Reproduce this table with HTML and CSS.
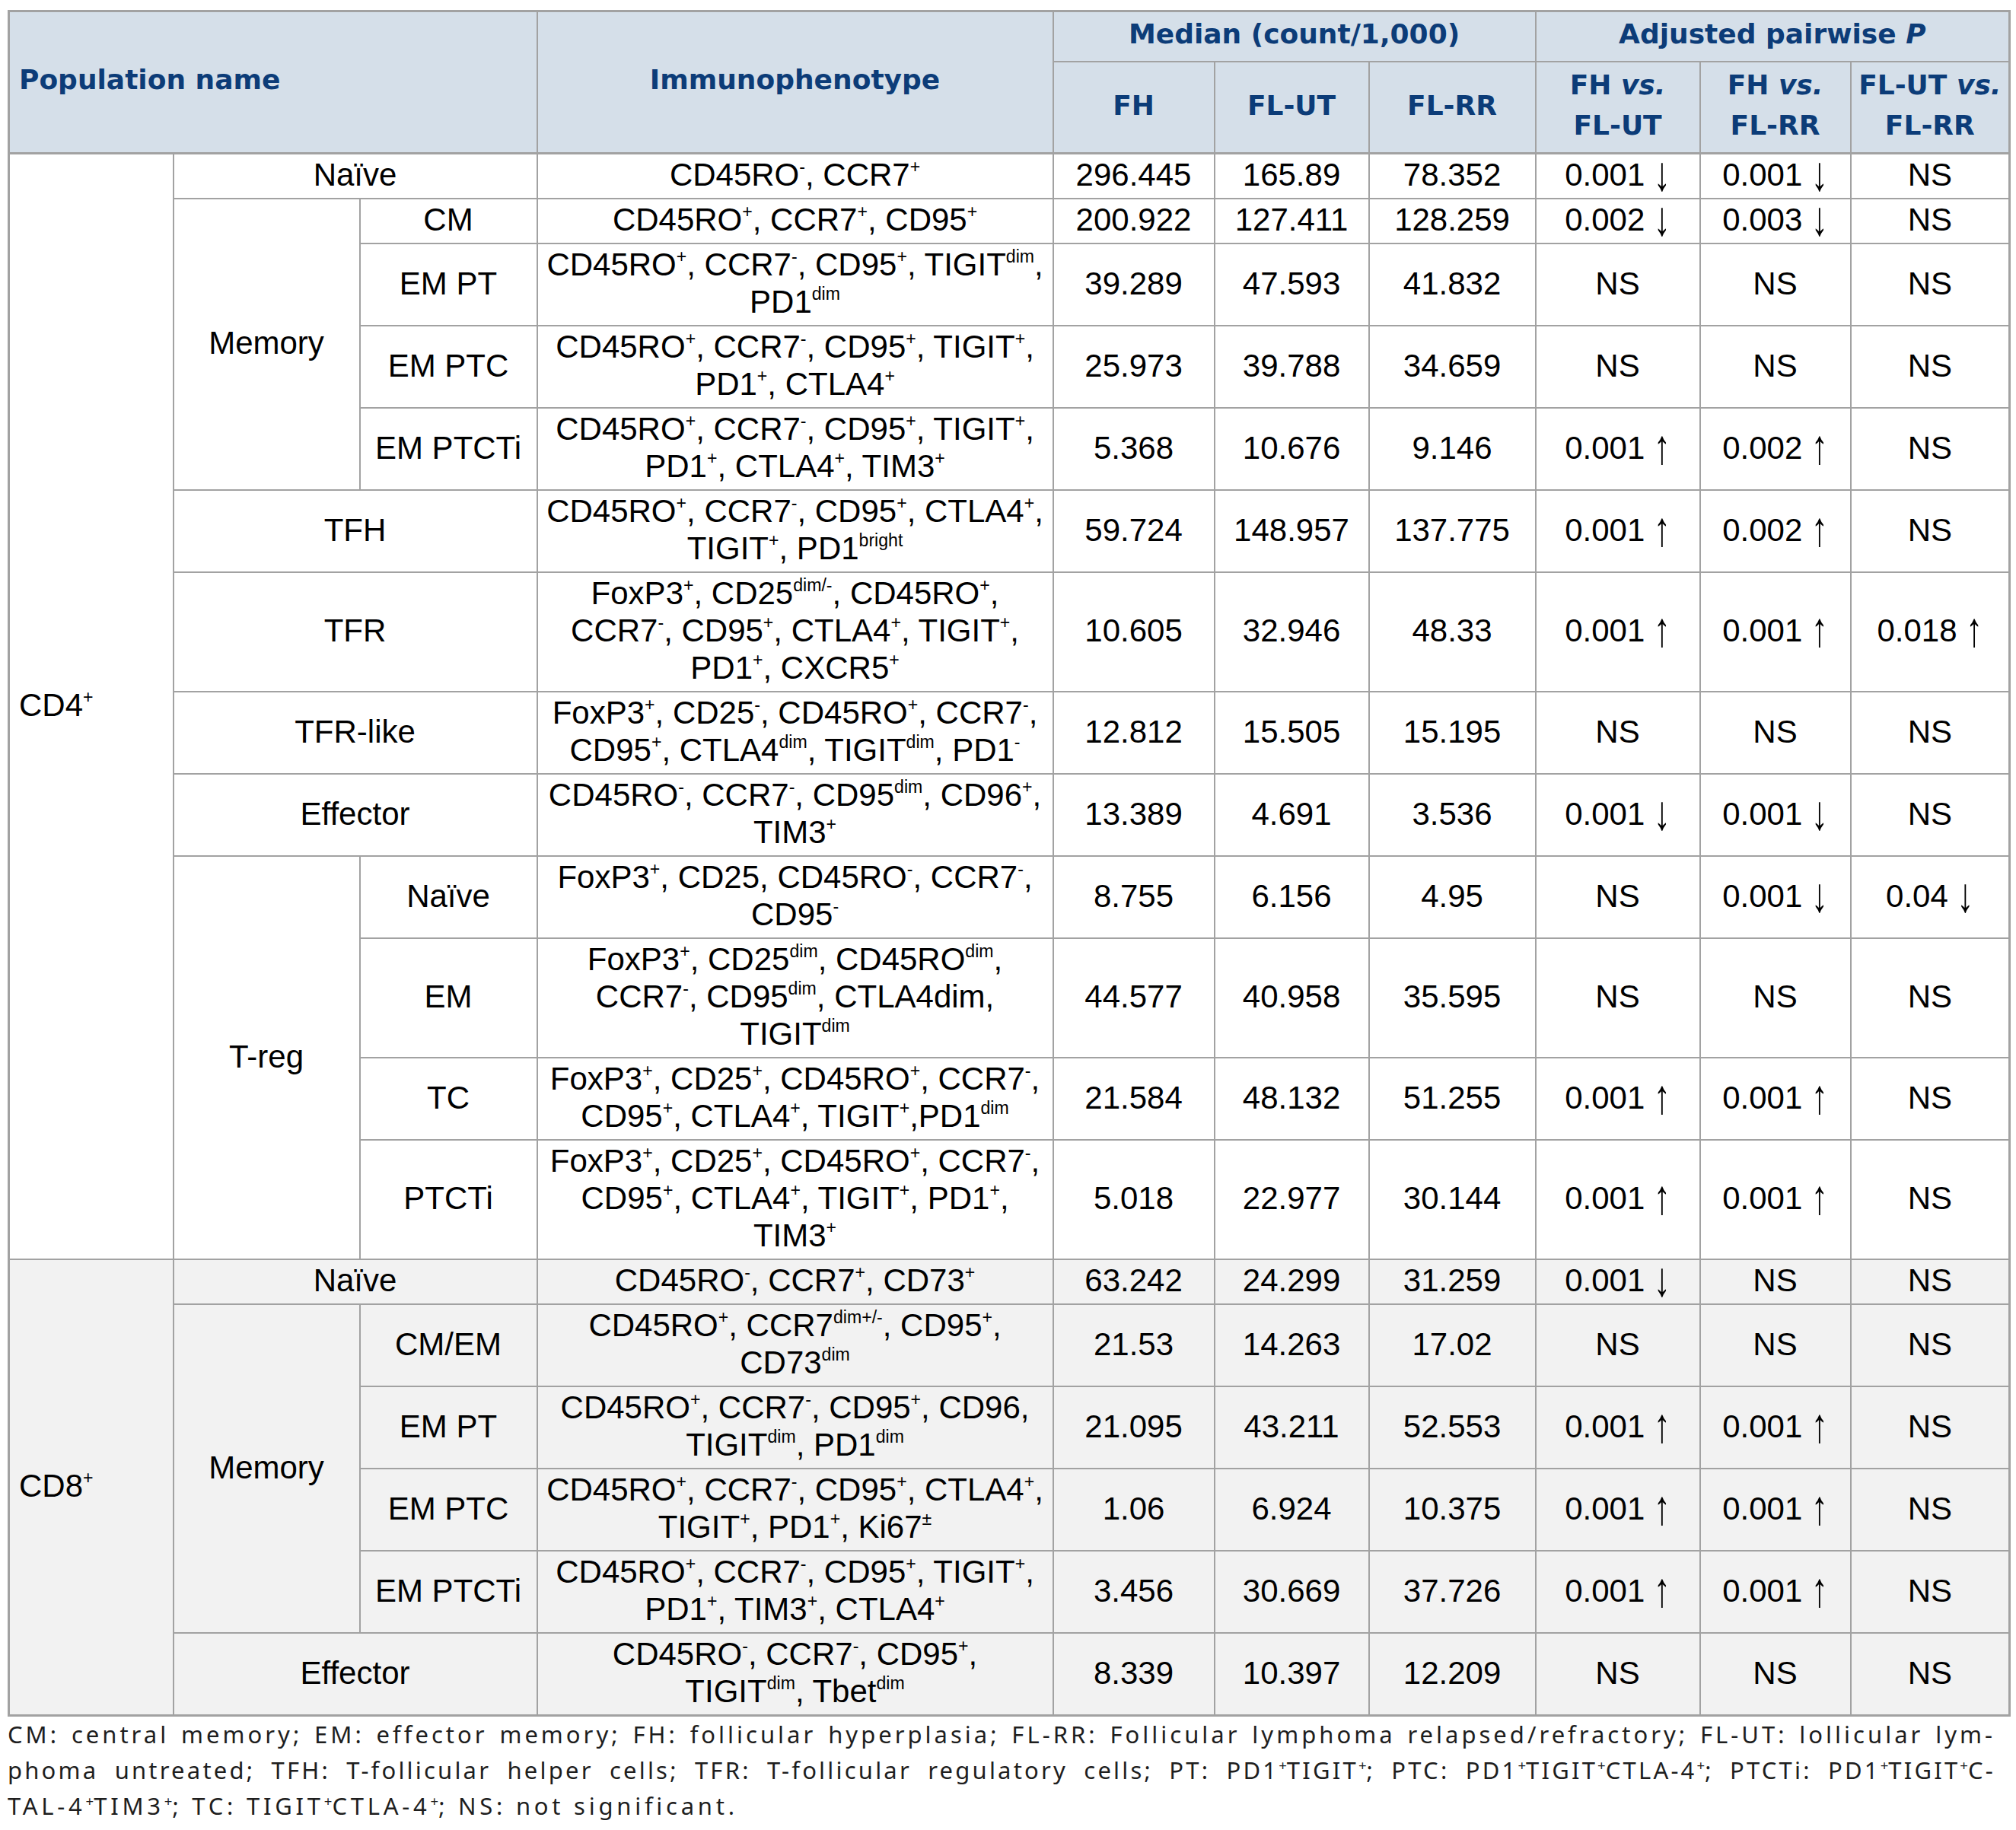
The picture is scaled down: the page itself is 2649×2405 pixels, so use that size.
FILE: index.html
```html
<!DOCTYPE html>
<html lang="en">
<head>
<meta charset="utf-8">
<title>T-cell populations</title>
<link rel="stylesheet" href="styles.css">
</head>
<body>
<div class="page">
<table class="data">
<colgroup>
<col class="c1"><col class="c2"><col class="c3"><col class="c4"><col class="c5"><col class="c6"><col class="c7"><col class="c8"><col class="c9"><col class="c10">
</colgroup>
<thead>
<tr class="hr1">
<th class="pop" colspan="3" rowspan="2">Population name</th>
<th rowspan="2">Immunophenotype</th>
<th colspan="3">Median (count/1,000)</th>
<th colspan="3">Adjusted pairwise <i>P</i></th>
</tr>
<tr class="hr2">
<th>FH</th><th>FL-UT</th><th>FL-RR</th>
<th>FH <i>vs.</i><br>FL-UT</th><th>FH <i>vs.</i><br>FL-RR</th><th>FL-UT <i>vs.</i><br>FL-RR</th>
</tr>
</thead>
<tbody class="cd4">
<tr><td class="grp" rowspan="13">CD4<sup>+</sup></td><td colspan="2">Naïve</td><td class="ph">CD45RO<sup>-</sup>, CCR7<sup>+</sup></td><td>296.445</td><td>165.89</td><td>78.352</td><td>0.001 <span class="ar">↓</span></td><td>0.001 <span class="ar">↓</span></td><td>NS</td></tr>
<tr><td rowspan="4">Memory</td><td>CM</td><td class="ph">CD45RO<sup>+</sup>, CCR7<sup>+</sup>, CD95<sup>+</sup></td><td>200.922</td><td>127.411</td><td>128.259</td><td>0.002 <span class="ar">↓</span></td><td>0.003 <span class="ar">↓</span></td><td>NS</td></tr>
<tr><td>EM PT</td><td class="ph">CD45RO<sup>+</sup>, CCR7<sup>-</sup>, CD95<sup>+</sup>, TIGIT<sup>dim</sup>,<br>PD1<sup>dim</sup></td><td>39.289</td><td>47.593</td><td>41.832</td><td>NS</td><td>NS</td><td>NS</td></tr>
<tr><td>EM PTC</td><td class="ph">CD45RO<sup>+</sup>, CCR7<sup>-</sup>, CD95<sup>+</sup>, TIGIT<sup>+</sup>,<br>PD1<sup>+</sup>, CTLA4<sup>+</sup></td><td>25.973</td><td>39.788</td><td>34.659</td><td>NS</td><td>NS</td><td>NS</td></tr>
<tr><td>EM PTCTi</td><td class="ph">CD45RO<sup>+</sup>, CCR7<sup>-</sup>, CD95<sup>+</sup>, TIGIT<sup>+</sup>,<br>PD1<sup>+</sup>, CTLA4<sup>+</sup>, TIM3<sup>+</sup></td><td>5.368</td><td>10.676</td><td>9.146</td><td>0.001 <span class="ar">↑</span></td><td>0.002 <span class="ar">↑</span></td><td>NS</td></tr>
<tr><td colspan="2">TFH</td><td class="ph">CD45RO<sup>+</sup>, CCR7<sup>-</sup>, CD95<sup>+</sup>, CTLA4<sup>+</sup>,<br>TIGIT<sup>+</sup>, PD1<sup>bright</sup></td><td>59.724</td><td>148.957</td><td>137.775</td><td>0.001 <span class="ar">↑</span></td><td>0.002 <span class="ar">↑</span></td><td>NS</td></tr>
<tr><td colspan="2">TFR</td><td class="ph">FoxP3<sup>+</sup>, CD25<sup>dim/-</sup>, CD45RO<sup>+</sup>,<br>CCR7<sup>-</sup>, CD95<sup>+</sup>, CTLA4<sup>+</sup>, TIGIT<sup>+</sup>,<br>PD1<sup>+</sup>, CXCR5<sup>+</sup></td><td>10.605</td><td>32.946</td><td>48.33</td><td>0.001 <span class="ar">↑</span></td><td>0.001 <span class="ar">↑</span></td><td>0.018 <span class="ar">↑</span></td></tr>
<tr><td colspan="2">TFR-like</td><td class="ph">FoxP3<sup>+</sup>, CD25<sup>-</sup>, CD45RO<sup>+</sup>, CCR7<sup>-</sup>,<br>CD95<sup>+</sup>, CTLA4<sup>dim</sup>, TIGIT<sup>dim</sup>, PD1<sup>-</sup></td><td>12.812</td><td>15.505</td><td>15.195</td><td>NS</td><td>NS</td><td>NS</td></tr>
<tr><td colspan="2">Effector</td><td class="ph">CD45RO<sup>-</sup>, CCR7<sup>-</sup>, CD95<sup>dim</sup>, CD96<sup>+</sup>,<br>TIM3<sup>+</sup></td><td>13.389</td><td>4.691</td><td>3.536</td><td>0.001 <span class="ar">↓</span></td><td>0.001 <span class="ar">↓</span></td><td>NS</td></tr>
<tr><td rowspan="4">T-reg</td><td>Naïve</td><td class="ph">FoxP3<sup>+</sup>, CD25, CD45RO<sup>-</sup>, CCR7<sup>-</sup>,<br>CD95<sup>-</sup></td><td>8.755</td><td>6.156</td><td>4.95</td><td>NS</td><td>0.001 <span class="ar">↓</span></td><td>0.04 <span class="ar">↓</span></td></tr>
<tr><td>EM</td><td class="ph">FoxP3<sup>+</sup>, CD25<sup>dim</sup>, CD45RO<sup>dim</sup>,<br>CCR7<sup>-</sup>, CD95<sup>dim</sup>, CTLA4dim,<br>TIGIT<sup>dim</sup></td><td>44.577</td><td>40.958</td><td>35.595</td><td>NS</td><td>NS</td><td>NS</td></tr>
<tr><td>TC</td><td class="ph">FoxP3<sup>+</sup>, CD25<sup>+</sup>, CD45RO<sup>+</sup>, CCR7<sup>-</sup>,<br>CD95<sup>+</sup>, CTLA4<sup>+</sup>, TIGIT<sup>+</sup>,PD1<sup>dim</sup></td><td>21.584</td><td>48.132</td><td>51.255</td><td>0.001 <span class="ar">↑</span></td><td>0.001 <span class="ar">↑</span></td><td>NS</td></tr>
<tr><td>PTCTi</td><td class="ph">FoxP3<sup>+</sup>, CD25<sup>+</sup>, CD45RO<sup>+</sup>, CCR7<sup>-</sup>,<br>CD95<sup>+</sup>, CTLA4<sup>+</sup>, TIGIT<sup>+</sup>, PD1<sup>+</sup>,<br>TIM3<sup>+</sup></td><td>5.018</td><td>22.977</td><td>30.144</td><td>0.001 <span class="ar">↑</span></td><td>0.001 <span class="ar">↑</span></td><td>NS</td></tr>
</tbody>
<tbody class="cd8">
<tr><td class="grp" rowspan="6">CD8<sup>+</sup></td><td colspan="2">Naïve</td><td class="ph">CD45RO<sup>-</sup>, CCR7<sup>+</sup>, CD73<sup>+</sup></td><td>63.242</td><td>24.299</td><td>31.259</td><td>0.001 <span class="ar">↓</span></td><td>NS</td><td>NS</td></tr>
<tr><td rowspan="4">Memory</td><td>CM/EM</td><td class="ph">CD45RO<sup>+</sup>, CCR7<sup>dim+/-</sup>, CD95<sup>+</sup>,<br>CD73<sup>dim</sup></td><td>21.53</td><td>14.263</td><td>17.02</td><td>NS</td><td>NS</td><td>NS</td></tr>
<tr><td>EM PT</td><td class="ph">CD45RO<sup>+</sup>, CCR7<sup>-</sup>, CD95<sup>+</sup>, CD96,<br>TIGIT<sup>dim</sup>, PD1<sup>dim</sup></td><td>21.095</td><td>43.211</td><td>52.553</td><td>0.001 <span class="ar">↑</span></td><td>0.001 <span class="ar">↑</span></td><td>NS</td></tr>
<tr><td>EM PTC</td><td class="ph">CD45RO<sup>+</sup>, CCR7<sup>-</sup>, CD95<sup>+</sup>, CTLA4<sup>+</sup>,<br>TIGIT<sup>+</sup>, PD1<sup>+</sup>, Ki67<sup>±</sup></td><td>1.06</td><td>6.924</td><td>10.375</td><td>0.001 <span class="ar">↑</span></td><td>0.001 <span class="ar">↑</span></td><td>NS</td></tr>
<tr><td>EM PTCTi</td><td class="ph">CD45RO<sup>+</sup>, CCR7<sup>-</sup>, CD95<sup>+</sup>, TIGIT<sup>+</sup>,<br>PD1<sup>+</sup>, TIM3<sup>+</sup>, CTLA4<sup>+</sup></td><td>3.456</td><td>30.669</td><td>37.726</td><td>0.001 <span class="ar">↑</span></td><td>0.001 <span class="ar">↑</span></td><td>NS</td></tr>
<tr><td colspan="2">Effector</td><td class="ph">CD45RO<sup>-</sup>, CCR7<sup>-</sup>, CD95<sup>+</sup>,<br>TIGIT<sup>dim</sup>, Tbet<sup>dim</sup></td><td>8.339</td><td>10.397</td><td>12.209</td><td>NS</td><td>NS</td><td>NS</td></tr>
</tbody>
</table>
<div class="note">
<div class="jl l1">CM: central memory; EM: effector memory; FH: follicular hyperplasia; FL-RR: Follicular lymphoma relapsed/refractory; FL-UT: lollicular lym-</div>
<div class="jl l2">phoma untreated; TFH: T-follicular helper cells; TFR: T-follicular regulatory cells; PT: PD1<sup>+</sup>TIGIT<sup>+</sup>; PTC: PD1<sup>+</sup>TIGIT<sup>+</sup>CTLA-4<sup>+</sup>; PTCTi: PD1<sup>+</sup>TIGIT<sup>+</sup>C-</div>
<div class="ll">TAL-4<sup>+</sup>TIM3<sup>+</sup>; TC: TIGIT<sup>+</sup>CTLA-4<sup>+</sup>; NS: not significant.</div>
</div>
</div>
</body>
</html>
```

FILE: styles.css
```css
html, body {
  margin: 0;
  padding: 0;
  background: #ffffff;
}

.page {
  padding: 13px 10px 0 10px;
  width: 2629px;
}

.data {
  width: 2629px;
  table-layout: fixed;
  border-collapse: collapse;
  border: 3px solid #a2a2a2;
  font-family: "Liberation Sans", Arial, sans-serif;
  font-size: 42px;
  color: #000;
}

.c1 { width: 216px; }
.c2 { width: 245px; }
.c3 { width: 233px; }
.c4 { width: 678px; }
.c5 { width: 212px; }
.c6 { width: 203px; }
.c7 { width: 219px; }
.c8 { width: 216px; }
.c9 { width: 198px; }
.c10 { width: 209px; }

.data th,
.data td {
  border: 2px solid #a2a2a2;
  text-align: center;
  vertical-align: middle;
}

.data th {
  background: #d5dfe9;
  color: #0c3c78;
  font-family: "DejaVu Sans", sans-serif;
  font-weight: bold;
  font-size: 36px;
  padding: 3px 4px 9px 4px;
  line-height: 52px;
  white-space: nowrap;
}

.data .hr2 th {
  line-height: 53px;
}

.data th.pop {
  text-align: left;
  padding-left: 12px;
}

.data td {
  padding: 2px 6px 6px 6px;
  line-height: 49px;
  white-space: nowrap;
}

.data td.grp {
  text-align: left;
  padding-left: 12px;
}

.cd4 tr:first-child td {
  border-top-width: 3px;
}

.cd8 td {
  background: #f2f2f2;
}

.data sup {
  font-size: 0.55em;
  line-height: 0;
  vertical-align: 0.75em;
}

.ar {
  display: inline-block;
  line-height: 0;
  font-size: 44px;
  transform: scaleY(1.45);
  transform-origin: 50% 60%;
  vertical-align: 1px;
}

.note {
  margin-top: 0;
  padding-right: 17px;
  font-family: "Noto Sans", sans-serif;
  font-size: 31px;
  line-height: 47px;
  letter-spacing: 4.75px;
  color: #1e1e1e;
}

.note .jl {
  white-space: nowrap;
  text-align: justify;
  text-align-last: justify;
}

.note .l1 {
  letter-spacing: 4px;
}

.note .l2 {
  letter-spacing: 3.2px;
}

.note .ll {
  text-align: left;
}

.note sup {
  font-size: 0.6em;
  line-height: 0;
  vertical-align: 0.6em;
  letter-spacing: 0;
}
```
